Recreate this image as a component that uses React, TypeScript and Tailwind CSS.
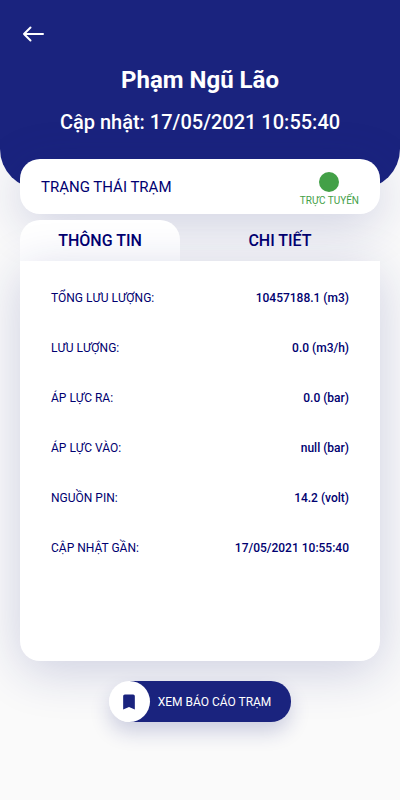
import { useState } from "react";

const rows = [
  { label: "TỔNG LƯU LƯỢNG:", value: "10457188.1 (m3)" },
  { label: "LƯU LƯỢNG:", value: "0.0 (m3/h)" },
  { label: "ÁP LỰC RA:", value: "0.0 (bar)" },
  { label: "ÁP LỰC VÀO:", value: "null (bar)" },
  { label: "NGUỒN PIN:", value: "14.2 (volt)" },
  { label: "CẬP NHẬT GẦN:", value: "17/05/2021 10:55:40" },
];

function Header() {
  return (
    <header className="rounded-b-[40px] bg-[#1a237e] px-5 pt-5 pb-[53px] text-center text-white">
      <div className="flex">
        <button type="button" aria-label="Quay lại" className="flex h-7 w-7 items-center justify-center">
          <svg viewBox="0 0 24 24" className="h-6 w-6" fill="none" stroke="currentColor" strokeWidth="2" strokeLinecap="round" strokeLinejoin="round">
            <path d="M21 12H2M8.5 5.5L2 12L8.5 18.5" />
          </svg>
        </button>
      </div>
      <h1 className="mt-4 text-2xl leading-8 font-bold">Phạm Ngũ Lão</h1>
      <p className="mt-3 text-xl leading-7 font-medium">Cập nhật: 17/05/2021 10:55:40</p>
    </header>
  );
}

function StatusCard() {
  return (
    <section className="-mt-[30px] flex h-[55px] items-center justify-between rounded-[20px] bg-white px-[21px] shadow-[0_10px_50px_rgba(26,35,126,0.2)]">
      <h2 className="text-[15px] leading-5">TRẠNG THÁI TRẠM</h2>
      <div className="flex flex-col items-center pt-2 text-[#43a047]">
        <span className="h-5 w-5 rounded-full bg-[#43a047]" />
        <span className="text-[10px] leading-[18px]">TRỰC TUYẾN</span>
      </div>
    </section>
  );
}

export default function App() {
  const [tab, setTab] = useState(0);
  return (
    <div className="min-h-screen overflow-x-hidden bg-[#fafafa] pb-10 font-['Roboto',sans-serif] text-[#000070]">
      <Header />
      <main className="px-5">
        <StatusCard />
        <div role="tablist" className="mt-[6px] grid h-[41px] grid-cols-[4fr_5fr] text-base font-medium">
          {["THÔNG TIN", "CHI TIẾT"].map((name, i) => (
            <button
              key={name}
              type="button"
              role="tab"
              aria-selected={tab === i}
              onClick={() => setTab(i)}
              className={tab === i ? "rounded-t-[20px] bg-white" : "rounded-t-[20px]"}
            >
              {name}
            </button>
          ))}
        </div>
        <section className="relative min-h-[400px] rounded-b-[20px] bg-white px-[31px] pt-3 shadow-[0_10px_50px_rgba(26,35,126,0.2)]">
          <dl>
            {rows.map((row) => (
              <div key={row.label} className="flex h-[50px] items-center justify-between text-xs">
                <dt>{row.label}</dt>
                <dd className="font-medium">{row.value}</dd>
              </div>
            ))}
          </dl>
        </section>
        <div className="relative mt-5 flex justify-center">
          <button type="button" className="flex items-center rounded-full text-xs text-white shadow-[0_10px_20px_rgba(26,35,126,0.2)]">
            <span className="z-10 flex h-[41px] w-[41px] items-center justify-center rounded-full bg-white text-[#1a237e]">
              <svg viewBox="0 0 24 24" className="h-5 w-5" fill="currentColor">
                <path d="M17 3H7c-1.1 0-2 .9-2 2v16l7-3 7 3V5c0-1.1-.9-2-2-2z" />
              </svg>
            </span>
            <span className="-ml-5 flex h-[41px] items-center rounded-r-[20px] bg-[#1a237e] pr-5 pl-7">XEM BÁO CÁO TRẠM</span>
          </button>
        </div>
      </main>
    </div>
  );
}
